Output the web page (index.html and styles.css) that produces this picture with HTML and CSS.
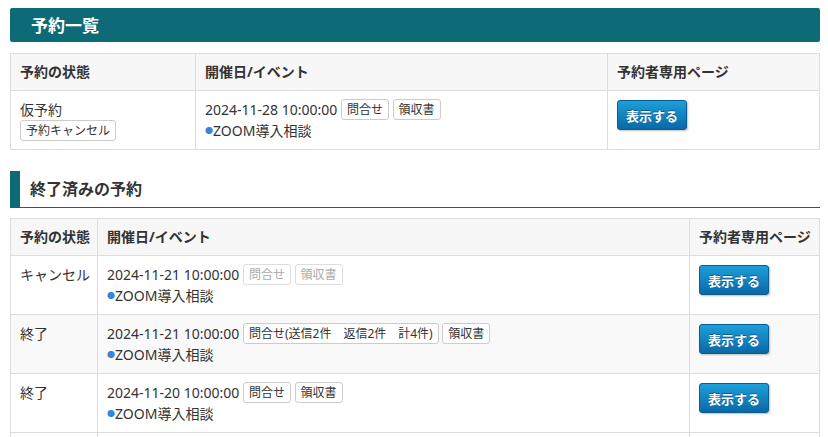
FILE: index.html
```html
<!DOCTYPE html>
<html lang="ja">
<head>
    <meta charset="UTF-8">
    <meta name="viewport" content="width=device-width, initial-scale=1.0">
    <title>予約一覧</title>
    <link rel="stylesheet" href="styles.css">
</head>
<body>
    <div class="page">
        <h1 class="page-title">予約一覧</h1>

        <table class="list list-current">
            <thead>
                <tr>
                    <th class="col-status">予約の状態</th>
                    <th class="col-event">開催日/イベント</th>
                    <th class="col-page">予約者専用ページ</th>
                </tr>
            </thead>
            <tbody>
                <tr>
                    <td>
                        <div>仮予約</div>
                        <button class="btn-small">予約キャンセル</button>
                    </td>
                    <td>
                        <div>2024-11-28 10:00:00 <button class="btn-small">問合せ</button> <button class="btn-small">領収書</button></div>
                        <div><span class="dot">●</span>ZOOM導入相談</div>
                    </td>
                    <td><button class="btn-view">表示する</button></td>
                </tr>
            </tbody>
        </table>

        <h2 class="section-title">終了済みの予約</h2>

        <table class="list list-past">
            <thead>
                <tr>
                    <th class="col-status">予約の状態</th>
                    <th class="col-event">開催日/イベント</th>
                    <th class="col-page">予約者専用ページ</th>
                </tr>
            </thead>
            <tbody>
                <tr>
                    <td>キャンセル</td>
                    <td>
                        <div>2024-11-21 10:00:00 <button class="btn-small" disabled>問合せ</button> <button class="btn-small" disabled>領収書</button></div>
                        <div><span class="dot">●</span>ZOOM導入相談</div>
                    </td>
                    <td><button class="btn-view">表示する</button></td>
                </tr>
                <tr>
                    <td>終了</td>
                    <td>
                        <div>2024-11-21 10:00:00 <button class="btn-small">問合せ(送信2件　返信2件　計4件)</button> <button class="btn-small">領収書</button></div>
                        <div><span class="dot">●</span>ZOOM導入相談</div>
                    </td>
                    <td><button class="btn-view">表示する</button></td>
                </tr>
                <tr>
                    <td>終了</td>
                    <td>
                        <div>2024-11-20 10:00:00 <button class="btn-small">問合せ</button> <button class="btn-small">領収書</button></div>
                        <div><span class="dot">●</span>ZOOM導入相談</div>
                    </td>
                    <td><button class="btn-view">表示する</button></td>
                </tr>
                <tr>
                    <td></td>
                    <td></td>
                    <td></td>
                </tr>
            </tbody>
        </table>
    </div>
</body>
</html>
```

FILE: styles.css
```css
body {
    margin: 0;
    font-family: "Noto Sans", "Noto Sans CJK JP", sans-serif;
    font-size: 14px;
    color: #333;
    background-color: #fff;
}
.page {
    padding: 8px 8px 0 10px;
}
.page-title {
    margin: 0 0 11px;
    height: 34px;
    line-height: 35px;
    padding: 0 21px;
    font-size: 17px;
    font-weight: bold;
    color: #fff;
    background-color: #0d6b77;
    border-radius: 2px;
}
.section-title {
    margin: 21px 0 10px;
    height: 36px;
    line-height: 36px;
    padding-left: 10px;
    font-size: 16px;
    font-weight: bold;
    color: #333;
    border-left: 10px solid #0d6b77;
    border-bottom: 1px solid #1d5f68;
}
.list {
    width: 100%;
    border-collapse: collapse;
    table-layout: fixed;
}
.list th,
.list td {
    border: 1px solid #ddd;
    text-align: left;
    vertical-align: top;
    padding: 8px 9px;
    white-space: nowrap;
}
.list th {
    background-color: #f7f7f7;
    font-weight: bold;
    line-height: 20px;
}
.list td {
    line-height: 21px;
}
.list-current .col-status { width: 166px; }
.list-current .col-page { width: 193px; }
.list-past .col-status { width: 68px; }
.list-past .col-page { width: 111px; }
.list-past tbody tr:nth-child(2) {
    background-color: #f9f9f9;
}
.list-past tbody tr:nth-child(4) td {
    height: 40px;
}
.btn-small {
    font-family: inherit;
    font-size: 12px;
    line-height: 19px;
    height: 21px;
    padding: 0 5px;
    margin: 0;
    color: #333;
    background-color: #fff;
    border: 1px solid #ccc;
    border-radius: 3px;
    vertical-align: 1px;
    cursor: pointer;
}
.btn-small:disabled {
    color: #aaa;
    border-color: #ddd;
    cursor: default;
}
.dot {
    color: #3a83d6;
    font-size: 8px;
    vertical-align: 2px;
}
.btn-view {
    font-family: inherit;
    width: 70px;
    height: 30px;
    margin-top: 1px;
    padding: 0;
    font-size: 13px;
    font-weight: bold;
    color: #fff;
    text-shadow: 0 -1px 0 rgba(0, 0, 0, 0.35);
    background: linear-gradient(to bottom, #1d9fd9, #0a69a7);
    border: 1px solid #0a5d93;
    border-radius: 3px;
    box-shadow: 1px 1px 2px rgba(0, 0, 0, 0.25);
    cursor: pointer;
}
```
